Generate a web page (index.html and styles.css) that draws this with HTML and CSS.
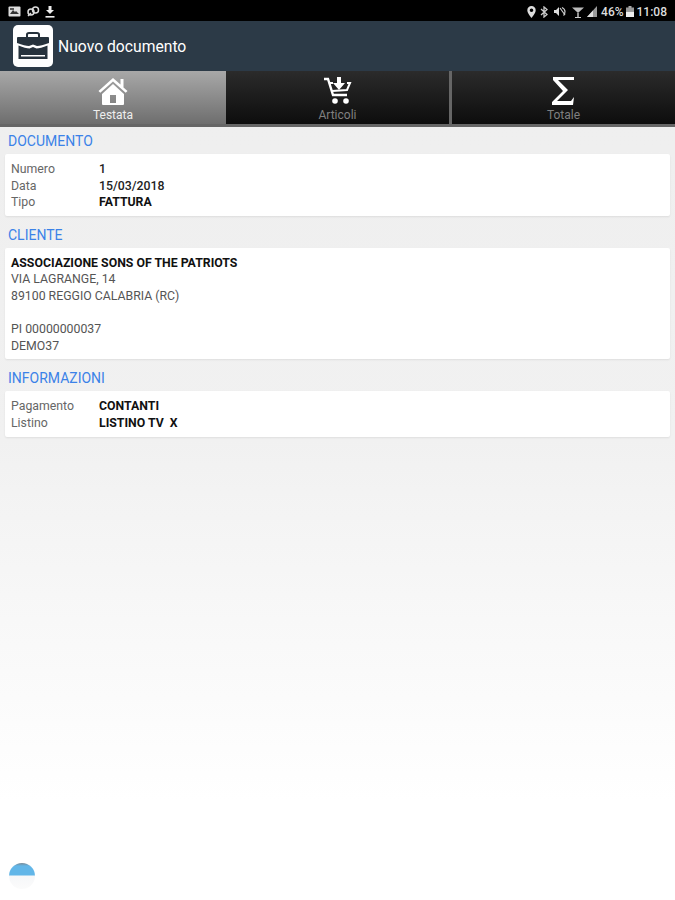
FILE: index.html
```html
<!DOCTYPE html>
<html lang="it">
<head>
    <meta charset="UTF-8">
    <meta name="viewport" content="width=device-width, initial-scale=1.0">
    <title>Nuovo documento</title>
    <link rel="stylesheet" href="styles.css">
</head>
<body>
    <div class="page">
        <div class="status-bar">
            <div class="status-left">
                <svg width="13" height="11" viewBox="0 0 13 11"><rect x="0.5" y="0.5" width="12" height="10" rx="1" fill="#ddd"/><path d="M2 8l3-4 2 2 1-1 3 3z" fill="#333"/><rect x="2" y="2" width="4" height="2" fill="#555"/></svg>
                <svg width="14" height="11" viewBox="0 0 14 11" fill="none" stroke="#ddd" stroke-width="1.5"><circle cx="5" cy="6" r="3"/><circle cx="9.5" cy="4" r="3"/><path d="M2 10l3-3"/></svg>
                <svg width="10" height="12" viewBox="0 0 10 12" fill="#eee"><path d="M3.5 0h3v4H9L5 8 1 4h2.5z"/><rect x="0.5" y="10" width="9" height="1.6"/></svg>
            </div>
            <div class="status-right">
                <svg width="9" height="12" viewBox="0 0 9 12"><path d="M4.5 0a4.2 4.2 0 0 0-4.2 4.2C.3 7 4.5 12 4.5 12s4.2-5 4.2-7.8A4.2 4.2 0 0 0 4.5 0zm0 6a1.8 1.8 0 1 1 0-3.600 1.800 1.800 0 0 1 0 3.600z" fill="#ddd"/></svg>
                <svg class="bt" width="8" height="12" viewBox="0 0 8 12" fill="none" stroke="#ccc" stroke-width="1.3"><path d="M1 3l6 5.500L4 11V1l3 2.500L1 9"/></svg>
                <svg class="mute" width="13" height="11" viewBox="0 0 13 11"><path d="M0 4h2l3-3v9L2 7H0z" fill="#ddd"/><path d="M6 2l5 7M8 1.500c2 1 3 2.500 3 4s-.5 3-1.500 4" stroke="#ccc" stroke-width="1.200" fill="none"/></svg>
                <svg class="wifi" width="12" height="12" viewBox="0 0 12 12"><path d="M0 1.500h12L6 7z" fill="#bbb"/><path d="M5.300 7h1.400v4H5.300zM3 11h6v1H3z" fill="#ccc"/></svg>
                <svg width="10" height="11" viewBox="0 0 10 11"><path d="M10 0v11H0z" fill="#999"/><path d="M6 4.500V11H0z" fill="#ddd"/></svg>
                <span class="status-text pct">46%</span>
                <svg width="8" height="11" viewBox="0 0 8 11"><rect x="2.500" width="3" height="2" fill="#aaa"/><rect y="1.500" width="8" height="4" fill="#999"/><rect y="5.500" width="8" height="5.500" fill="#eee"/></svg>
                <span class="status-text time">11:08</span>
            </div>
        </div>

        <div class="app-bar">
            <div class="app-icon">
                <svg width="34" height="32" viewBox="0 0 34 32">
                    <path d="M11 8V4.500Q11 3 13 3h8q2 0 2 1.500V8" fill="none" stroke="#26323c" stroke-width="2"/>
                    <path d="M1 8q0-1 1-1h30q1 0 1 1v5q-8 3-12 3l-4-1.500L13 16q-4 0-12-3z" fill="#26323c"/>
                    <path d="M2.500 15.500q7 3 11 3l3.500-1.500 3.500 1.500q4 0 11-3V29H2.500z" fill="#26323c"/>
                    <rect x="5" y="25" width="24" height="1.500" fill="#fff"/>
                </svg>
            </div>
            <span class="app-title">Nuovo documento</span>
        </div>

        <div class="tabs">
            <div class="tab tab-active">
                <svg width="30" height="28" viewBox="0 0 30 28" fill="#fff">
                    <path d="M15 1L0.500 14l1.800 1.800L15 4.500l12.700 11.300 1.800-1.800-4-3.600V2h-3v5.600z"/>
                    <path d="M15 7L4 17v10q0 1 1 1h20q1 0 1-1V17zm-3 11h6v8h-6z" fill-rule="evenodd"/>
                </svg>
                <span class="tab-label">Testata</span>
            </div>
            <div class="tab">
                <svg width="30" height="28" viewBox="0 0 30 28" fill="none">
                    <path d="M1 2h4l5 16h14" stroke="#fff" stroke-width="2.400"/>
                    <path d="M7 6h3M9 14l15-1 3-7h-3" stroke="#fff" stroke-width="2"/>
                    <path d="M14 0h4v6h4l-6 7-6-7h4z" fill="#fff"/>
                    <circle cx="12" cy="24" r="2.800" fill="#fff"/>
                    <circle cx="23" cy="24" r="2.800" fill="#fff"/>
                </svg>
                <span class="tab-label">Articoli</span>
            </div>
            <div class="tab tab-last">
                <svg width="26" height="28" viewBox="0 0 26 28" fill="#fff">
                    <path d="M2 0h21v3H7l10 10L6 24h14l3-4-1 8H1v-3l11-11L2 3z"/>
                </svg>
                <span class="tab-label">Totale</span>
            </div>
        </div>

        <div class="content">
            <h2 class="section-title">DOCUMENTO</h2>
            <div class="card">
                <div class="row"><span class="row-label">Numero</span><span class="row-value">1</span></div>
                <div class="row"><span class="row-label">Data</span><span class="row-value">15/03/2018</span></div>
                <div class="row"><span class="row-label">Tipo</span><span class="row-value strong">FATTURA</span></div>
            </div>

            <h2 class="section-title">CLIENTE</h2>
            <div class="card">
                <div class="line strong">ASSOCIAZIONE SONS OF THE PATRIOTS</div>
                <div class="line">VIA LAGRANGE, 14</div>
                <div class="line">89100 REGGIO CALABRIA (RC)</div>
                <div class="line">&nbsp;</div>
                <div class="line">PI 00000000037</div>
                <div class="line">DEMO37</div>
            </div>

            <h2 class="section-title">INFORMAZIONI</h2>
            <div class="card">
                <div class="row"><span class="row-label">Pagamento</span><span class="row-value strong">CONTANTI</span></div>
                <div class="row"><span class="row-label">Listino</span><span class="row-value strong">LISTINO TV&nbsp; X</span></div>
            </div>
        </div>

        <div class="bubble"></div>
    </div>
</body>
</html>
```

FILE: styles.css
```css
body {
    margin: 0;
    font-family: Roboto, "Liberation Sans", sans-serif;
}
.page {
    position: relative;
    height: 900px;
    overflow: hidden;
    background: linear-gradient(#eeeeee 0, #f1f1f1 440px, #ffffff 800px);
}
.status-bar {
    height: 21px;
    box-sizing: border-box;
    background-color: #000;
    display: flex;
    justify-content: space-between;
    align-items: center;
    padding: 2px 8px 0;
}
.status-left {
    display: flex;
    align-items: center;
    gap: 5px;
}
.status-right {
    display: flex;
    align-items: center;
    gap: 4px;
}
.bt {
    margin-right: 2px;
}
.mute {
    margin-right: 1px;
}
.wifi {
    margin-right: -1px;
}
.status-text {
    color: #ddd;
    font-size: 12px;
    font-weight: 500;
}
.pct {
    margin-right: -2px;
}
.time {
    margin-left: -1px;
}
.app-bar {
    height: 50px;
    box-sizing: border-box;
    background-color: #2c3a47;
    display: flex;
    align-items: center;
    padding-left: 13px;
    gap: 5px;
}
.app-icon {
    width: 40px;
    height: 42px;
    background-color: #fff;
    border-radius: 5px;
    display: flex;
    justify-content: center;
    align-items: center;
}
.app-title {
    color: #fff;
    font-size: 15.700px;
}
.tabs {
    height: 56px;
    box-sizing: border-box;
    display: flex;
    background-color: #666;
    padding-bottom: 3px;
}
.tab {
    flex: 1;
    display: flex;
    flex-direction: column;
    align-items: center;
    padding-top: 6px;
    box-sizing: border-box;
    background: linear-gradient(#2b2b2b, #0d0d0d);
}
.tab-active {
    flex: none;
    width: 226px;
    background: linear-gradient(#a8a8a8, #6e6e6e);
}
.tab-last {
    margin-left: 3px;
}
.tab-label {
    color: #808080;
    font-size: 12px;
    line-height: 14px;
    margin-top: 3px;
}
.tab-active .tab-label {
    color: #eee;
}
.content {
    padding: 0 5px;
}
.section-title {
    margin: 0;
    padding-left: 3px;
    height: 27px;
    line-height: 28px;
    font-size: 14px;
    font-weight: 400;
    color: #3b82e8;
}
.card {
    background-color: #fff;
    padding: 7px 6px 5px;
    margin-bottom: 5px;
    border-radius: 2px;
    box-shadow: 0 1px 2px rgba(0,0,0,0.08);
    font-size: 12.300px;
    line-height: 16.600px;
    color: #555;
}
.row {
    display: flex;
}
.row-label {
    width: 88px;
    color: #666;
}
.row-value {
    color: #222;
    font-weight: 500;
}
.strong {
    color: #111;
    font-weight: 700;
}
.bubble {
    position: absolute;
    left: 9px;
    top: 863px;
    width: 26px;
    height: 26px;
    border-radius: 50%;
    background: linear-gradient(#7a8a96 0, #62b6e8 3px, #62b6e8 12px, #f6f7f9 13px, #fbfbfb 100%);
}
```
